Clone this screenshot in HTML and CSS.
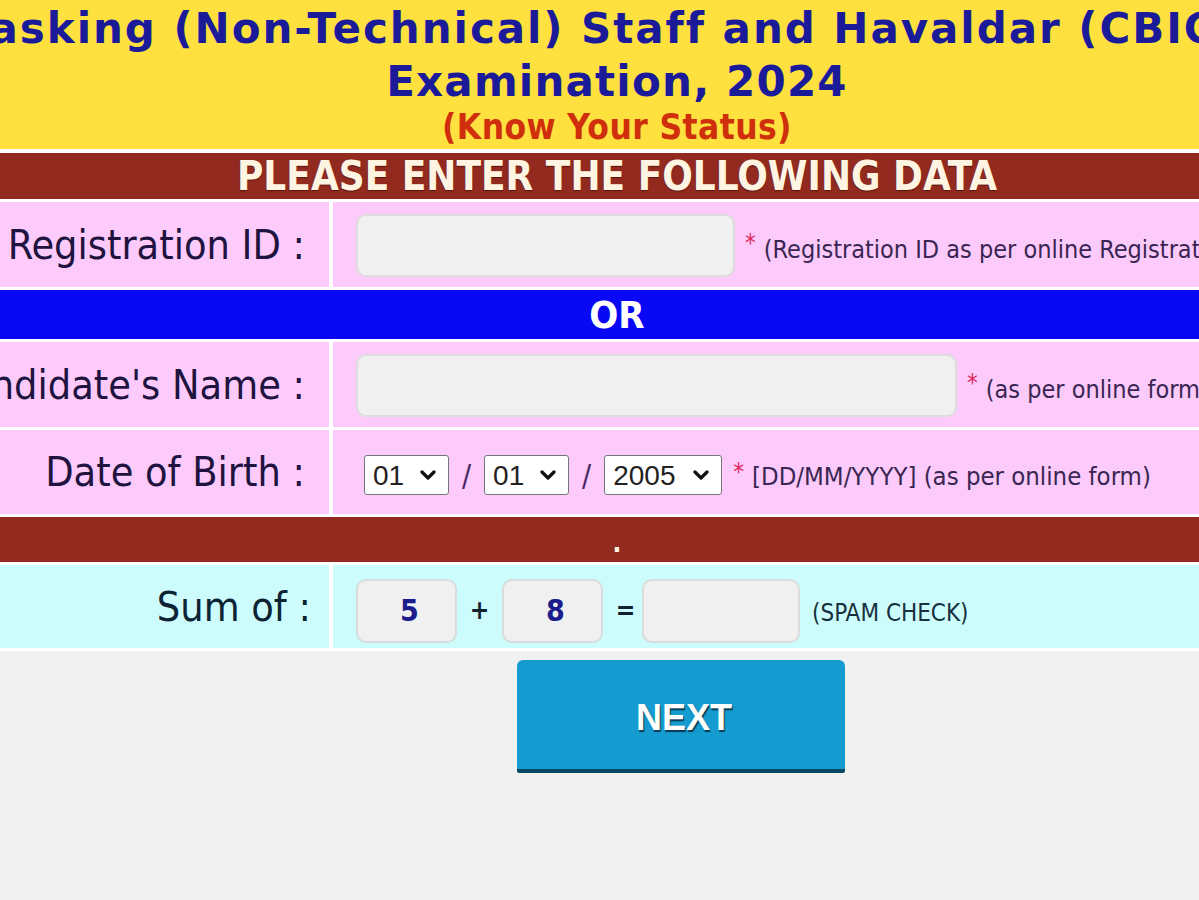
FILE: index.html
```html
<!DOCTYPE html>
<html lang="en">
<head>
<meta charset="utf-8">
<title>Know Your Status</title>
<link rel="stylesheet" href="styles.css">
</head>
<body>
<div class="page">
  <header class="hdr">
    <h1 class="title"><span class="line1">Multi-Tasking (Non-Technical) Staff and Havaldar (CBIC &amp; CBN)</span><br>Examination, 2024</h1>
    <p class="status">(Know Your Status)</p>
  </header>

  <div class="form">
    <div class="bar bar-red bar-head">PLEASE ENTER THE FOLLOWING DATA</div>

    <div class="row pink r1">
      <div class="lbl">Registration ID :</div>
      <div class="val">
        <input class="txt w-reg" type="text">
        <span class="req">*</span>
        <span class="note">(Registration ID as per online Registration)</span>
      </div>
    </div>

    <div class="bar bar-blue">OR</div>

    <div class="row pink r2">
      <div class="lbl">Candidate's Name :</div>
      <div class="val">
        <input class="txt w-name" type="text">
        <span class="req">*</span>
        <span class="note">(as per online form)</span>
      </div>
    </div>

    <div class="row pink r3">
      <div class="lbl">Date of Birth :</div>
      <div class="val">
        <span class="sel sel-dd">
          <select><option>01</option></select>
          <svg class="chev" viewBox="0 0 16 10" width="16" height="10"><path d="M2 2 L8 8 L14 2" fill="none" stroke="#111" stroke-width="3.2" stroke-linecap="round" stroke-linejoin="round"/></svg>
        </span>
        <span class="slash">/</span>
        <span class="sel sel-mm">
          <select><option>01</option></select>
          <svg class="chev" viewBox="0 0 16 10" width="16" height="10"><path d="M2 2 L8 8 L14 2" fill="none" stroke="#111" stroke-width="3.2" stroke-linecap="round" stroke-linejoin="round"/></svg>
        </span>
        <span class="slash">/</span>
        <span class="sel sel-yy">
          <select><option>2005</option></select>
          <svg class="chev" viewBox="0 0 16 10" width="16" height="10"><path d="M2 2 L8 8 L14 2" fill="none" stroke="#111" stroke-width="3.2" stroke-linecap="round" stroke-linejoin="round"/></svg>
        </span>
        <span class="req req-dob">*</span>
        <span class="note note-dob">[DD/MM/YYYY] (as per online form)</span>
      </div>
    </div>

    <div class="bar bar-red bar-dot">.</div>

    <div class="row cyan r4">
      <div class="lbl lbl-sum">Sum of :</div>
      <div class="val">
        <span class="num">5</span>
        <span class="op">+</span>
        <span class="num">8</span>
        <span class="op">=</span>
        <input class="txt w-sum" type="text">
        <span class="spam">(SPAM CHECK)</span>
      </div>
    </div>
  </div>

  <div class="actions">
    <button class="next" type="button">NEXT</button>
  </div>
</div>
</body>
</html>
```

FILE: styles.css
```css
html, body {
  margin: 0;
  padding: 0;
}
body {
  background: #f1f1f1;
  overflow: hidden;
  width: 1199px;
  height: 900px;
}
.page {
  width: 1600px;
  margin-left: -183px;
}

/* header */
.hdr {
  background: #fee13f;
  text-align: center;
  padding: 2px 0 3px;
  height: 144px;
}
.title {
  margin: 0;
  font-family: "DejaVu Sans", Verdana, sans-serif;
  font-weight: bold;
  font-size: 42px;
  letter-spacing: 1.2px;
  line-height: 53px;
  color: #1b1b9a;
  white-space: nowrap;
}
.line1 {
  letter-spacing: 1.95px;
}
.status {
  margin: 0;
  font-family: "DejaVu Sans Condensed", "DejaVu Sans", sans-serif;
  font-stretch: condensed;
  font-weight: bold;
  font-size: 35px;
  letter-spacing: 0.4px;
  line-height: 38px;
  color: #d02f0c;
}

/* form */
.form {
  background: #ffffff;
  padding: 4px 0 3px;
  display: flex;
  flex-direction: column;
  gap: 3px;
}
.bar {
  display: flex;
  align-items: center;
  justify-content: center;
  color: #fff4e2;
  font-family: "DejaVu Sans Condensed", "DejaVu Sans", sans-serif;
  font-stretch: condensed;
  font-weight: bold;
}
.bar-red {
  background: #922a20;
}
.bar-head {
  height: 46px;
  font-size: 40px;
  text-shadow: 0 1px 1px #5a140c;
}
.bar-blue {
  background: #0808f4;
  height: 49px;
  font-size: 38px;
  color: #ffffff;
}
.bar-dot {
  height: 45px;
  font-size: 26px;
  line-height: 1;
  padding-top: 6px;
  box-sizing: border-box;
}

.row {
  display: grid;
  grid-template-columns: 512px 1fr;
  column-gap: 4px;
}
.r1, .r2 { height: 85px; }
.r3 { height: 84px; }
.r4 { height: 83px; }

.pink .lbl, .pink .val { background: #fccbfb; }
.cyan .lbl, .cyan .val { background: #ccfcfc; }

.lbl {
  display: flex;
  align-items: center;
  justify-content: flex-end;
  padding-right: 24px;
  font-family: "DejaVu Sans Condensed", "DejaVu Sans", sans-serif;
  font-stretch: condensed;
  font-size: 41px;
  color: #20133f;
  white-space: nowrap;
}
.lbl-sum {
  padding-right: 18px;
  color: #0c2333;
}
.val {
  display: flex;
  align-items: center;
  padding-left: 23px;
  white-space: nowrap;
  font-family: "DejaVu Sans Condensed", "DejaVu Sans", sans-serif;
  font-stretch: condensed;
}

.txt {
  box-sizing: border-box;
  height: 63px;
  margin: 0;
  padding: 0 10px;
  background: #f0f0f0;
  border: 2px solid #dcdcdc;
  border-radius: 10px;
  font-size: 22px;
  outline: none;
}
.w-reg { width: 379px; margin-top: 2px; }
.w-name { width: 601px; margin-top: 2px; }
.w-sum { width: 158px; height: 64px; margin-top: 8px; }

.req {
  color: #e0275c;
  font-size: 24px;
  margin-left: 10px;
  position: relative;
  top: -2px;
}
.note {
  color: #3a2553;
  font-size: 25px;
  margin-left: 8px;
  position: relative;
  top: 5px;
}

/* DOB selects */
.sel {
  position: relative;
  display: inline-flex;
  margin-top: 6px;
}
.sel select {
  appearance: none;
  -webkit-appearance: none;
  box-sizing: border-box;
  height: 40px;
  margin: 0;
  padding: 0 0 0 8px;
  background: #ffffff;
  border: 1px solid #767676;
  border-radius: 3px;
  font-family: "Liberation Sans", Arial, sans-serif;
  font-size: 28px;
  color: #222;
}
.sel-dd { margin-left: 8px; }
.sel-dd select, .sel-mm select { width: 85px; }
.sel-yy select { width: 118px; }
.chev {
  position: absolute;
  right: 13px;
  top: 15px;
  pointer-events: none;
}
.slash {
  font-size: 30px;
  color: #4b2466;
  margin: 6px 13px 0 13px;
}
.req-dob { margin-left: 11px; top: 0; }
.note-dob { top: 4px; margin-left: 8px; font-size: 25.5px; }

/* sum */
.num {
  box-sizing: border-box;
  width: 101px;
  height: 64px;
  margin-top: 8px;
  display: inline-flex;
  align-items: center;
  justify-content: center;
  padding-left: 6px;
  background: #f0f0f0;
  border: 2px solid #d8dcdc;
  border-radius: 10px;
  color: #1c1c8c;
  font-size: 30px;
  font-weight: bold;
}
.op {
  width: 45px;
  text-align: center;
  font-size: 26px;
  font-weight: bold;
  color: #102030;
  margin-top: 6px;
}
.op + .w-sum { margin-left: -6px; }
.spam {
  margin-left: 12px;
  margin-top: 12px;
  font-size: 24px;
  color: #18303e;
}

/* button */
.actions {
  padding-top: 9px;
}
.next {
  margin-left: 700px;
  width: 328px;
  height: 113px;
  box-sizing: border-box;
  background: #149bd0;
  border: none;
  border-bottom: 4px solid #0a4762;
  border-radius: 6px 6px 2px 2px;
  color: #ffffff;
  font-family: "Liberation Sans", Arial, sans-serif;
  font-weight: bold;
  font-size: 36px;
  text-shadow: 1px 2px 1px #063a52;
  cursor: pointer;
  padding: 6px 0 0 6px;
}
```
